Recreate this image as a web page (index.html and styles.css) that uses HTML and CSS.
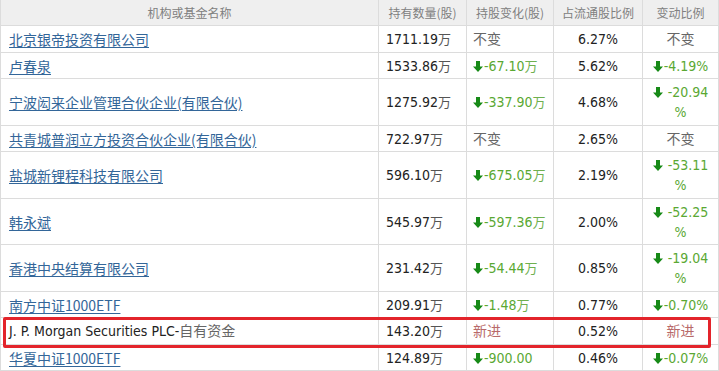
FILE: index.html
```html
<!DOCTYPE html>
<html lang="zh-CN">
<head>
<meta charset="utf-8">
<link rel="stylesheet" href="styles.css">
</head>
<body>
<div class="wrap">
<table class="tbl">
  <colgroup>
    <col class="c1"><col class="c2"><col class="c3"><col class="c4"><col class="c5">
  </colgroup>
  <thead>
    <tr><th>机构或基金名称</th><th>持有数量(股)</th><th>持股变化(股)</th><th>占流通股比例</th><th>变动比例</th></tr>
  </thead>
  <tbody>
    <tr><td class="name"><a href="#">北京银帝投资有限公司</a></td><td class="num">1711.19<span class="w">万</span></td><td class="chg"><span class="same">不变</span></td><td class="pct">6.27%</td><td class="ratio"><span class="same">不变</span></td></tr>
    <tr><td class="name"><a href="#">卢春泉</a></td><td class="num">1533.86<span class="w">万</span></td><td class="chg"><span class="dn"><svg class="arr" viewBox="0 0 10 11"><path d="M3 0h4v5.5h3L5 11 0 5.5h3z"/></svg>-67.10<span class="w">万</span></span></td><td class="pct">5.62%</td><td class="ratio"><span class="dn"><svg class="arr" viewBox="0 0 10 11"><path d="M3 0h4v5.5h3L5 11 0 5.5h3z"/></svg>-4.19%</span></td></tr>
    <tr><td class="name"><a href="#">宁波闳来企业管理合伙企业(有限合伙)</a></td><td class="num">1275.92<span class="w">万</span></td><td class="chg"><span class="dn"><svg class="arr" viewBox="0 0 10 11"><path d="M3 0h4v5.5h3L5 11 0 5.5h3z"/></svg>-337.90<span class="w">万</span></span></td><td class="pct">4.68%</td><td class="ratio"><span class="dn"><svg class="arr" viewBox="0 0 10 11"><path d="M3 0h4v5.5h3L5 11 0 5.5h3z"/></svg> -20.94<br>%</span></td></tr>
    <tr><td class="name"><a href="#">共青城普润立方投资合伙企业(有限合伙)</a></td><td class="num">722.97<span class="w">万</span></td><td class="chg"><span class="same">不变</span></td><td class="pct">2.65%</td><td class="ratio"><span class="same">不变</span></td></tr>
    <tr><td class="name"><a href="#">盐城新锂程科技有限公司</a></td><td class="num">596.10<span class="w">万</span></td><td class="chg"><span class="dn"><svg class="arr" viewBox="0 0 10 11"><path d="M3 0h4v5.5h3L5 11 0 5.5h3z"/></svg>-675.05<span class="w">万</span></span></td><td class="pct">2.19%</td><td class="ratio"><span class="dn"><svg class="arr" viewBox="0 0 10 11"><path d="M3 0h4v5.5h3L5 11 0 5.5h3z"/></svg> -53.11<br>%</span></td></tr>
    <tr><td class="name"><a href="#">韩永斌</a></td><td class="num">545.97<span class="w">万</span></td><td class="chg"><span class="dn"><svg class="arr" viewBox="0 0 10 11"><path d="M3 0h4v5.5h3L5 11 0 5.5h3z"/></svg>-597.36<span class="w">万</span></span></td><td class="pct">2.00%</td><td class="ratio"><span class="dn"><svg class="arr" viewBox="0 0 10 11"><path d="M3 0h4v5.5h3L5 11 0 5.5h3z"/></svg> -52.25<br>%</span></td></tr>
    <tr><td class="name"><a href="#">香港中央结算有限公司</a></td><td class="num">231.42<span class="w">万</span></td><td class="chg"><span class="dn"><svg class="arr" viewBox="0 0 10 11"><path d="M3 0h4v5.5h3L5 11 0 5.5h3z"/></svg>-54.44<span class="w">万</span></span></td><td class="pct">0.85%</td><td class="ratio"><span class="dn"><svg class="arr" viewBox="0 0 10 11"><path d="M3 0h4v5.5h3L5 11 0 5.5h3z"/></svg> -19.04<br>%</span></td></tr>
    <tr><td class="name"><a href="#">南方中证1000ETF</a></td><td class="num">209.91<span class="w">万</span></td><td class="chg"><span class="dn"><svg class="arr" viewBox="0 0 10 11"><path d="M3 0h4v5.5h3L5 11 0 5.5h3z"/></svg>-1.48<span class="w">万</span></span></td><td class="pct">0.77%</td><td class="ratio"><span class="dn"><svg class="arr" viewBox="0 0 10 11"><path d="M3 0h4v5.5h3L5 11 0 5.5h3z"/></svg>-0.70%</span></td></tr>
    <tr class="hl"><td class="name plain">J. P. Morgan Securities PLC-<span class="cj">自有资金</span></td><td class="num">143.20<span class="w">万</span></td><td class="chg"><span class="new">新进</span></td><td class="pct">0.52%</td><td class="ratio"><span class="new">新进</span></td></tr>
    <tr><td class="name"><a href="#">华夏中证1000ETF</a></td><td class="num">124.89<span class="w">万</span></td><td class="chg"><span class="dn"><svg class="arr" viewBox="0 0 10 11"><path d="M3 0h4v5.5h3L5 11 0 5.5h3z"/></svg>-900.00</span></td><td class="pct">0.46%</td><td class="ratio"><span class="dn"><svg class="arr" viewBox="0 0 10 11"><path d="M3 0h4v5.5h3L5 11 0 5.5h3z"/></svg>-0.07%</span></td></tr>
  </tbody>
</table>
<div class="mark"></div>
</div>
</body>
</html>
```

FILE: styles.css
```css
html, body {
  margin: 0;
  padding: 0;
  background: #ffffff;
}
body {
  font-family: "DejaVu Sans Condensed", "DejaVu Sans", "Noto Sans CJK SC", sans-serif;
  color: #333333;
}
.wrap {
  position: relative;
  width: 718px;
}
.tbl {
  border-collapse: collapse;
  table-layout: fixed;
  width: 718px;
}
.c1 { width: 378px; }
.c2 { width: 88px; }
.c3 { width: 87px; }
.c4 { width: 89px; }
.c5 { width: 76px; }
.tbl th {
  background: #efefef;
  color: #808080;
  font-family: "Noto Sans CJK SC", sans-serif;
  font-weight: normal;
  font-size: 12px;
  line-height: 16px;
  height: 25px;
  padding: 0;
  text-align: center;
  border: 1px solid #dcdcdc;
  border-top: none;
}
.tbl td {
  border: 1px solid #dcdcdc;
  padding: 3px 7px 2.5px 7px;
  line-height: 20px;
  font-size: 14px;
  vertical-align: middle;
}
.tbl td.name {
  padding-left: 8px;
  font-family: "Noto Sans CJK SC", sans-serif;
  font-size: 14px;
}
.tbl td.name a {
  color: #336699;
  text-decoration: underline;
  text-underline-offset: 2px;
  line-height: 1;
}
.tbl td.plain {
  font-family: "DejaVu Sans Condensed", "DejaVu Sans", "Noto Sans CJK SC", sans-serif;
  font-size: 14px;
  color: #222222;
}
.w, .same, .new, .cj {
  line-height: 1;
}
.cj {
  font-family: "Noto Sans CJK SC", sans-serif;
  font-size: 14px;
  color: #666666;
}
.num { color: #222222; }
.tbl td.chg {
  white-space: nowrap;
  padding-left: 6px;
  padding-right: 0;
}
.w {
  font-family: "Noto Sans CJK SC", sans-serif;
  font-size: 13px;
  color: #555555;
}
.dn .w { color: #6fb04f; }
.pct { text-align: center; color: #222222; }
.ratio { text-align: center; }
.tbl td.ratio { padding-left: 3px; padding-right: 3px; }
.same {
  font-family: "Noto Sans CJK SC", sans-serif;
  font-size: 14px;
  color: #666666;
}
.new {
  font-family: "Noto Sans CJK SC", sans-serif;
  font-size: 14px;
  color: #b86a6a;
}
.dn { color: #5aa833; }
.arr {
  width: 10px;
  height: 11px;
  fill: #178a17;
  vertical-align: -1px;
  margin-right: 1px;
}
.mark {
  position: absolute;
  left: 3px;
  top: 317px;
  width: 702px;
  height: 25px;
  border: 3px solid #e3242b;
  border-radius: 2px;
}
```
